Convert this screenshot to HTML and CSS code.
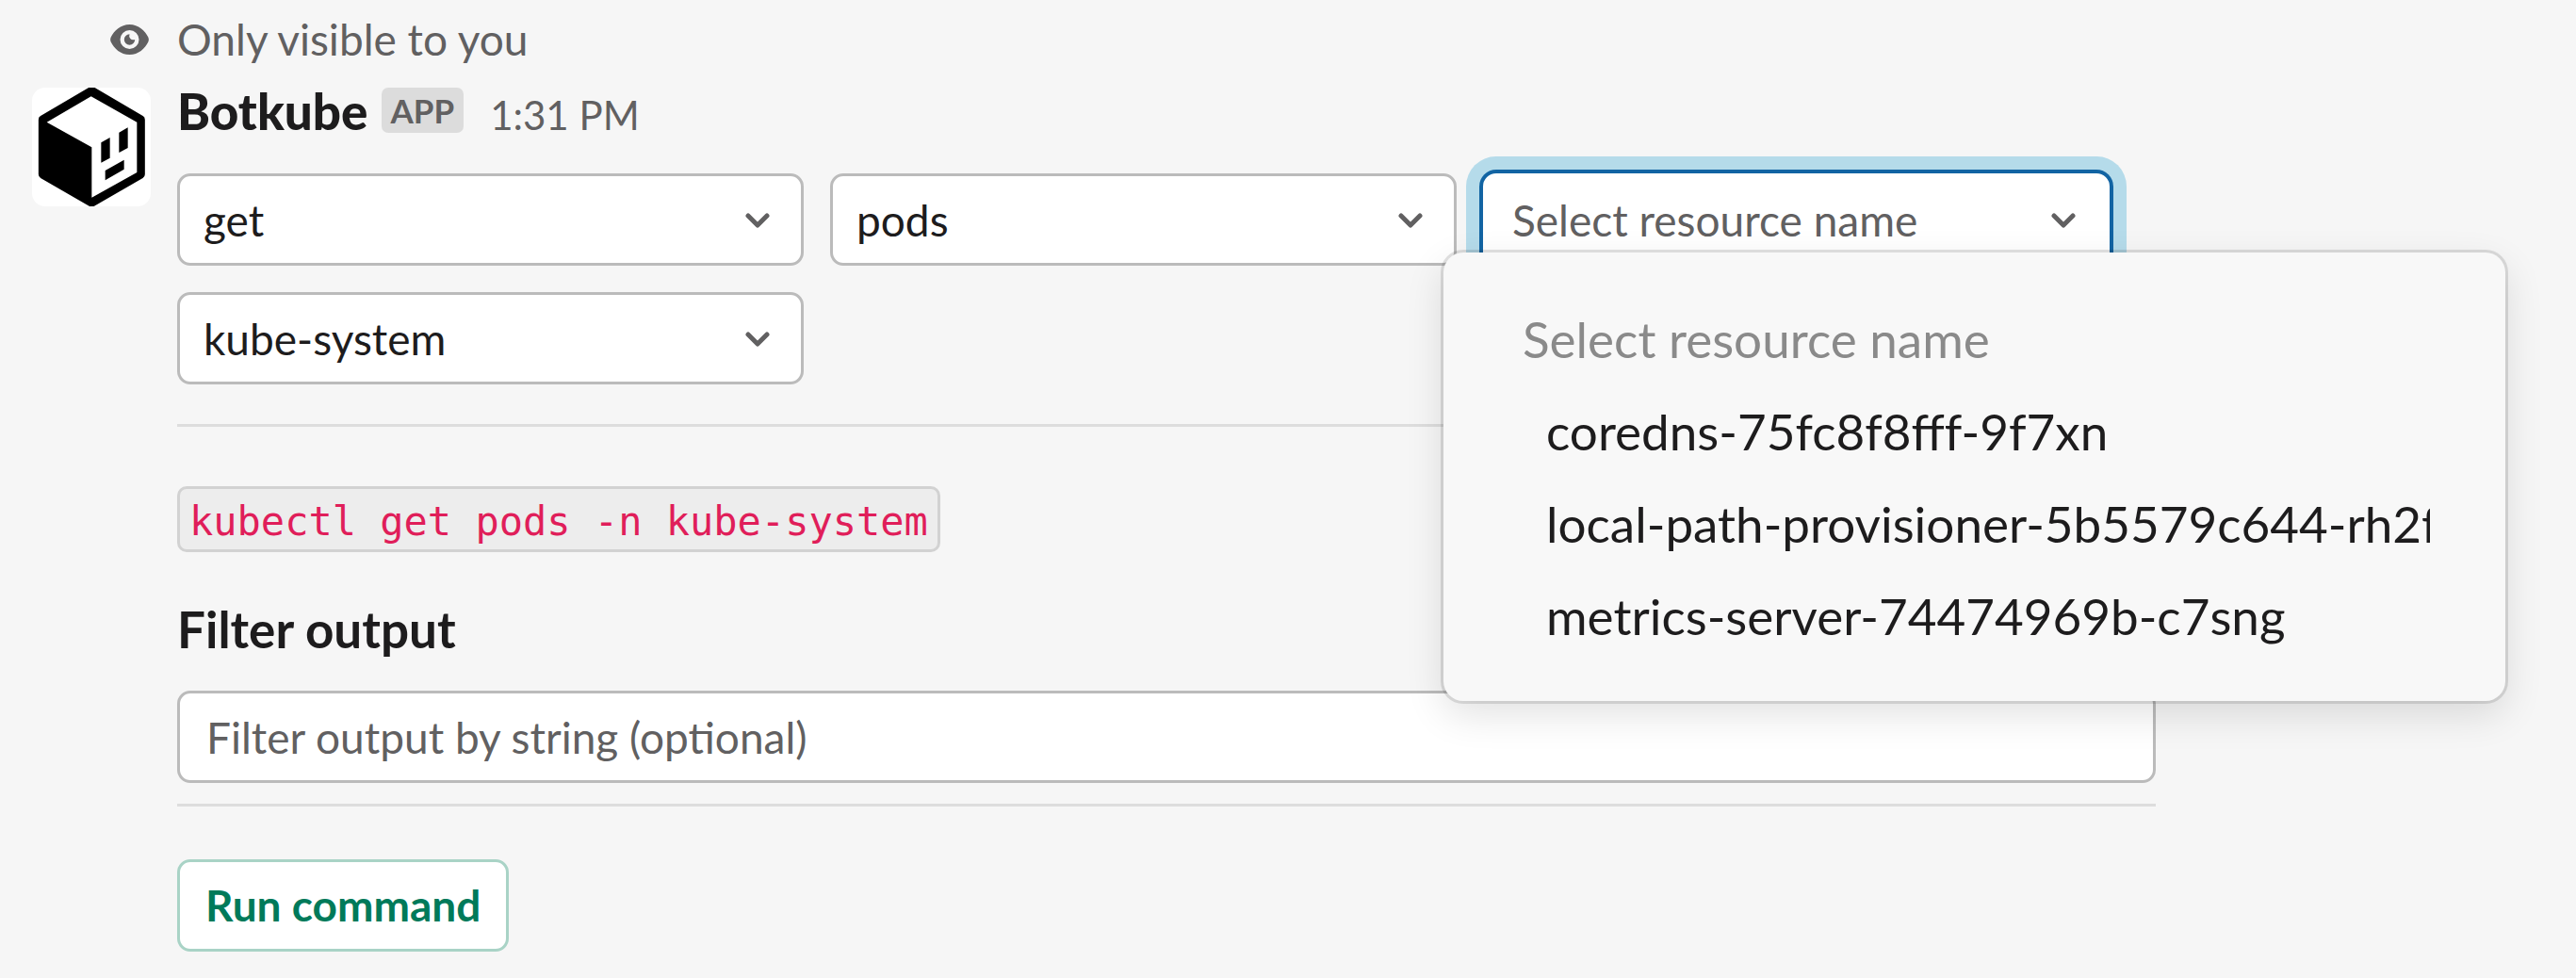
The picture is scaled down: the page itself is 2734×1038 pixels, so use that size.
FILE: index.html
```html
<!DOCTYPE html>
<html lang="en">
<head>
<meta charset="utf-8">
<title>Botkube</title>
<link rel="stylesheet" href="styles.css">
</head>
<body>
<main class="message">
  <div class="notice-icon">
    <svg class="eye" viewBox="0 0 41 32" aria-hidden="true">
      <path fill-rule="evenodd" d="M20.500 0C11 0 4 6.500 .7 13.500Q-.4 16 .7 18.500C4 25.500 11 32 20.500 32S37 25.500 40.300 18.500Q41.400 16 40.300 13.500C37 6.500 30 0 20.500 0ZM20.500 6a10 10 0 1 1 0 20a10 10 0 1 1 0-20Z"/>
      <path d="M20.500 10.300A5.700 5.700 0 1 0 26.200 16Q23 17 21.300 15Q19.500 13 20.500 10.300Z"/>
    </svg>
  </div>
  <p class="notice">Only visible to you</p>

  <svg class="avatar" viewBox="42 38 378 378" role="img" aria-label="Botkube">
    <rect x="42" y="38" width="378" height="378" fill="#fff"/>
    <path d="M76 140L232 48L388 140V314L232 404L76 314Z" stroke="#000" stroke-width="27" stroke-linejoin="round"/>
    <path d="M89 148L230 66L376 148V308L232 388V228Z" fill="#fff"/>
    <path d="M262 213L290 197V262L262 277ZM319 181L347 165V230L319 245ZM275 302L335 268V298L275 333Z"/>
  </svg>
  <div class="body">
    <header class="sender">
      <strong class="name">Botkube</strong>
      <span class="badge">APP</span>
      <time class="time" datetime="13:31">1:31 PM</time>
    </header>

    <div class="selects">
      <div class="field">
        <select class="select" aria-label="Verb"><option>get</option></select>
        <svg class="chevron" viewBox="0 0 26 16" aria-hidden="true"><path d="M3 3L13 13L23 3"/></svg>
      </div>
      <div class="field">
        <select class="select" aria-label="Resource type"><option>pods</option></select>
        <svg class="chevron" viewBox="0 0 26 16" aria-hidden="true"><path d="M3 3L13 13L23 3"/></svg>
      </div>
      <div class="field">
        <select class="select select-open" aria-label="Resource name"><option>Select resource name</option></select>
        <svg class="chevron" viewBox="0 0 26 16" aria-hidden="true"><path d="M3 3L13 13L23 3"/></svg>
        <div class="menu">
          <div class="menu-title" id="menu-title">Select resource name</div>
          <ul class="options" role="listbox" aria-labelledby="menu-title">
            <li class="option" role="option">coredns-75fc8f8fff-9f7xn</li>
            <li class="option" role="option">local-path-provisioner-5b5579c644-rh2f</li>
            <li class="option" role="option">metrics-server-74474969b-c7sng</li>
          </ul>
        </div>
      </div>
      <div class="field">
        <select class="select" aria-label="Namespace"><option>kube-system</option></select>
        <svg class="chevron" viewBox="0 0 26 16" aria-hidden="true"><path d="M3 3L13 13L23 3"/></svg>
      </div>
    </div>

    <hr class="rule">
    <code class="command">kubectl get pods -n kube-system</code>

    <label class="label" for="filter">Filter output</label>
    <input class="input" id="filter" type="text" placeholder="Filter output by string (optional)">

    <hr class="rule rule-tight">
    <button class="button" type="button">Run command</button>
  </div>
</main>
</body>
</html>
```
FILE: styles.css
```css
* {
  box-sizing: border-box;
}

body {
  margin: 0;
  background: #f6f6f6;
  color: #1d1c1d;
  font-family: Lato, sans-serif;
  font-size: 46px;
}

.message {
  display: grid;
  grid-template-columns: 126px minmax(0, 2100px);
  column-gap: 28px;
  padding: 14px 34px 28px;
}

.notice-icon {
  display: flex;
  align-items: center;
  justify-content: flex-end;
  margin-bottom: 23px;
  padding-right: 2px;
}

.eye {
  width: 41px;
  height: 32px;
  fill: #616061;
}

.notice {
  margin: 0 0 23px;
  color: #616061;
  line-height: 56px;
}

.avatar {
  width: 126px;
  height: 126px;
  border-radius: 14px;
}

.sender {
  display: flex;
  align-items: baseline;
  height: 50px;
  margin-bottom: 41px;
  line-height: 50px;
}

.name {
  font-size: 53px;
  font-weight: 900;
}

.badge {
  align-self: flex-start;
  margin: 0 28px 0 14px;
  padding: 0 10px;
  border-radius: 7px;
  background: #dcdcdc;
  color: #616061;
  font-size: 35px;
  font-weight: 700;
  line-height: 48px;
}

.time {
  color: #616061;
  font-size: 42px;
}

.selects {
  display: grid;
  grid-template-columns: repeat(3, minmax(0, 665px));
  gap: 28px;
}

.field {
  position: relative;
}

.select,
.input {
  display: block;
  width: 100%;
  height: 98px;
  border: 3px solid #bbb;
  border-radius: 14px;
  background: #fff;
  color: #1d1c1d;
  font: inherit;
}

.select {
  appearance: none;
  padding: 0 84px 0 25px;
}

.select-open {
  padding-left: 28px;
  border-color: #fff;
  color: #616061;
  box-shadow: 0 0 0 4px #1264a3, 0 0 0 18px #b5dbea;
}

.chevron {
  position: absolute;
  top: 42px;
  right: 36px;
  width: 26px;
  height: 16px;
  fill: none;
  stroke: #616061;
  stroke-width: 5;
  stroke-linecap: round;
  stroke-linejoin: round;
  pointer-events: none;
}

.menu {
  position: absolute;
  z-index: 1;
  top: 84px;
  left: -42px;
  width: 1127px;
  padding: 43px 80px 41px 84px;
  border-radius: 21px;
  background: #f8f8f8;
  box-shadow: 0 0 0 3px rgba(29, 28, 29, 0.13), 0 14px 42px rgba(0, 0, 0, 0.12);
  font-size: 53px;
  line-height: 98px;
}

.menu-title {
  color: #8a8a8a;
}

.options {
  margin: 0;
  padding: 0;
  list-style: none;
}

.option {
  padding-left: 25px;
  overflow: hidden;
  white-space: nowrap;
}

.rule {
  height: 3px;
  margin: 42px 0 63px;
  border: 0;
  background: #ddd;
}

.rule-tight {
  margin: 22px 0 56px;
}

.command {
  display: block;
  width: fit-content;
  padding: 6px 10px 0;
  border: 3px solid #d2d2d2;
  border-radius: 10px;
  background: #ededed;
  color: #e01e5a;
  font: 42px/58px "DejaVu Sans Mono", monospace;
}

.label {
  display: block;
  margin: 51px 0 34px;
  font-size: 53px;
  font-weight: 700;
  line-height: 62px;
}

.input {
  padding: 0 28px;
}

.input::placeholder {
  color: #616061;
  opacity: 1;
}

.button {
  height: 98px;
  padding: 0 27px 2px;
  border: 3px solid #a9d3c6;
  border-radius: 14px;
  background: #fff;
  color: #007a5a;
  font: 700 46px Lato, sans-serif;
}
```
